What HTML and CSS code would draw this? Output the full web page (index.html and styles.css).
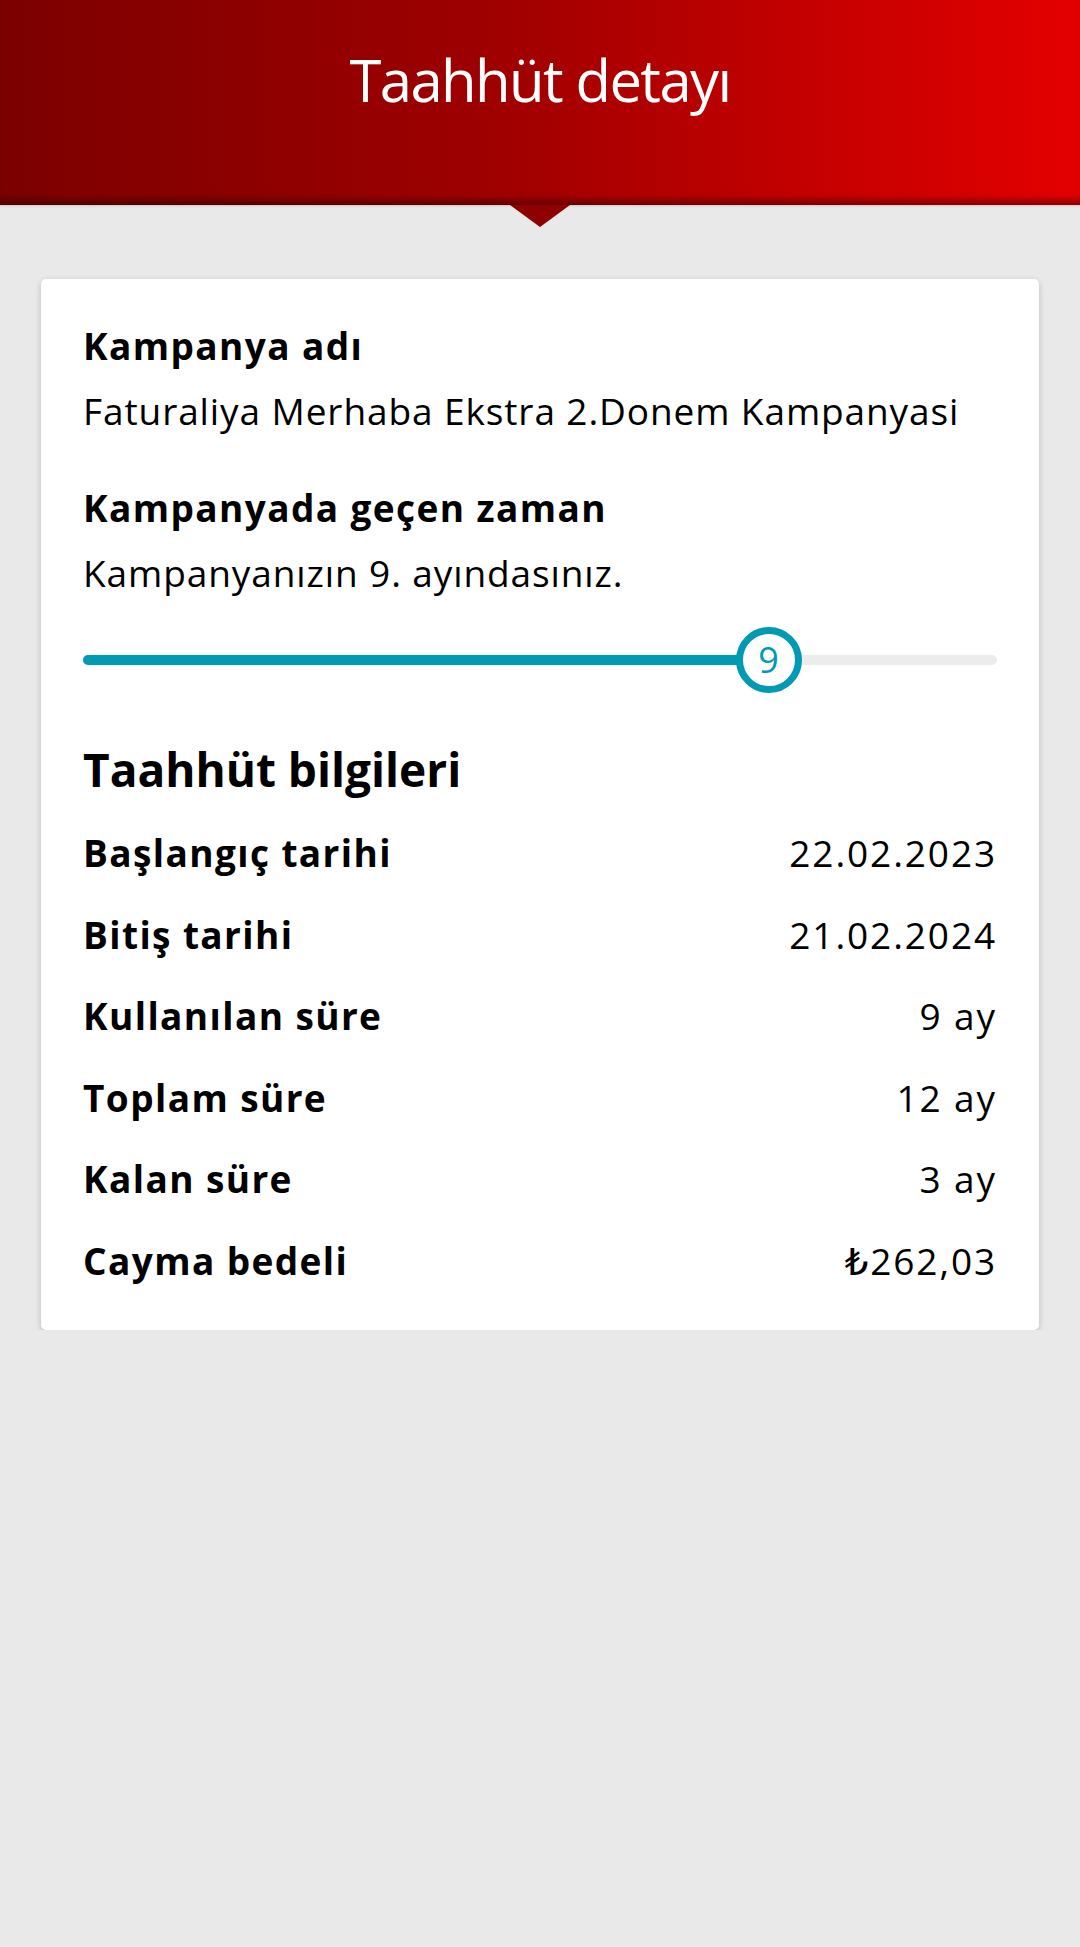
FILE: index.html
```html
<!DOCTYPE html>
<html lang="tr">
  <head>
    <meta charset="UTF-8" />
    <meta name="viewport" content="width=device-width, initial-scale=1.0" />
    <title>Taahhüt detayı</title>
    <link rel="stylesheet" href="styles.css">
  </head>
  <body>
    <header class="top-bar">
      <h1>Taahhüt detayı</h1>
    </header>

    <div class="detail-card">
      <div class="info-block">
        <h3>Kampanya adı</h3>
        <p>Faturaliya Merhaba Ekstra 2.Donem Kampanyasi</p>
      </div>
      <div class="info-block spaced">
        <h3>Kampanyada geçen zaman</h3>
        <p>Kampanyanızın 9. ayındasınız.</p>
      </div>

      <div class="progress">
        <div class="progress-track">
          <div class="progress-fill" style="width: 75%"></div>
        </div>
        <div class="progress-thumb" style="left: 75%">9</div>
      </div>

      <h2 class="section-title">Taahhüt bilgileri</h2>
      <ul class="detail-list">
        <li><span class="label">Başlangıç tarihi</span><span class="value">22.02.2023</span></li>
        <li><span class="label">Bitiş tarihi</span><span class="value">21.02.2024</span></li>
        <li><span class="label">Kullanılan süre</span><span class="value">9 ay</span></li>
        <li><span class="label">Toplam süre</span><span class="value">12 ay</span></li>
        <li><span class="label">Kalan süre</span><span class="value">3 ay</span></li>
        <li><span class="label">Cayma bedeli</span><span class="value">₺262,03</span></li>
      </ul>
    </div>
  </body>
</html>
```

FILE: styles.css
```css
body {
  font-family: "Open Sans", "DejaVu Sans", sans-serif;
  background-color: #e9e9e9;
  color: #000;
  margin: 0;
}
.top-bar {
  height: 205px;
  box-sizing: border-box;
  padding-top: 40px;
  background: linear-gradient(90deg, #7c0000 0%, #9e0000 45%, #e40000 100%);
  box-shadow: inset 0 -10px 8px -6px rgba(0, 0, 0, 0.45), 0 1px 2px rgba(0, 0, 0, 0.15);
  position: relative;
  text-align: center;
}
.top-bar::after {
  content: "";
  position: absolute;
  left: 510px;
  top: 205px;
  border-left: 30px solid transparent;
  border-right: 30px solid transparent;
  border-top: 22px solid #8f0000;
}
.top-bar h1 {
  margin: 0;
  color: #fff;
  font-size: 58px;
  font-weight: 400;
  line-height: 80px;
  letter-spacing: -1.6px;
}
.detail-card {
  background-color: #fff;
  margin: 74px 41px 0;
  padding: 34px 42px 29px;
  border-radius: 5px;
  box-shadow: 0 2px 6px rgba(0, 0, 0, 0.2);
}
.info-block h3,
.info-block p {
  margin: 0;
  font-size: 37px;
  line-height: 65px;
}
.info-block h3 {
  font-weight: 700;
  letter-spacing: 1.4px;
}
.info-block p {
  font-weight: 400;
  letter-spacing: 0.9px;
}
.info-block.spaced {
  margin-top: 32px;
}
.progress {
  position: relative;
  height: 66px;
  margin-top: 22px;
  display: flex;
  align-items: center;
}
.progress-track {
  flex: 1;
  height: 10px;
  border-radius: 5px;
  background-color: #ececec;
  overflow: hidden;
}
.progress-fill {
  height: 100%;
  background-color: #009ab5;
}
.progress-thumb {
  position: absolute;
  top: 0;
  width: 66px;
  height: 66px;
  margin-left: -33px;
  box-sizing: border-box;
  border: 7px solid #009ab5;
  border-radius: 50%;
  background-color: #fff;
  color: #009ab5;
  font-size: 36px;
  line-height: 52px;
  text-align: center;
}
.section-title {
  margin: 46px 0 0;
  font-size: 46px;
  font-weight: 700;
  line-height: 60px;
}
.detail-list {
  list-style: none;
  margin: 13px 0 0;
  padding: 0;
}
.detail-list li {
  display: flex;
  justify-content: space-between;
  font-size: 37px;
  line-height: 81.5px;
}
.detail-list .label {
  font-weight: 700;
  letter-spacing: 1.4px;
}
.detail-list .value {
  font-weight: 400;
  letter-spacing: 1.9px;
}
```
